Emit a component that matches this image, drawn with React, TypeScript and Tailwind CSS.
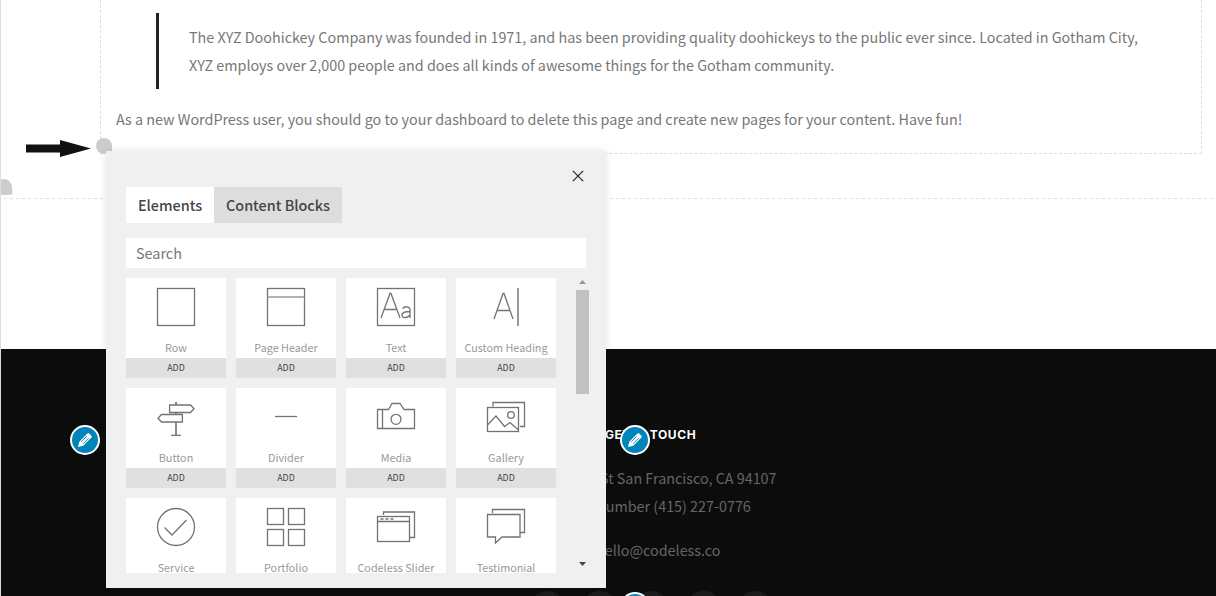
import type { ReactNode } from 'react';

const stroke = { fill: 'none', stroke: '#737373', strokeWidth: 1.3 };

function Icon({ children }: { children: ReactNode }) {
  return (
    <svg width="40" height="40" viewBox="0 0 40 40" {...stroke}>
      {children}
    </svg>
  );
}

const elements: { name: string; icon: ReactNode }[] = [
  { name: 'Row', icon: <rect x="1.5" y="1.5" width="37" height="37" /> },
  {
    name: 'Page Header',
    icon: (
      <>
        <rect x="1.5" y="1.5" width="37" height="37" />
        <path d="M1.5 10H38.5" stroke="#999" />
      </>
    ),
  },
  {
    name: 'Text',
    icon: (
      <>
        <rect x="1.5" y="1.5" width="37" height="37" />
        <path d="M5 31L14 6.5H15L24 31M8 22.5H21" />
        <path d="M26.500 21.500C29 19 34 19 34 23V31M34 24.500C29 24.500 26 25.500 26 28.200C26 31.500 31 31.500 34 28" />
      </>
    ),
  },
  {
    name: 'Custom Heading',
    icon: (
      <>
        <path d="M8 32L17 6.500H18L27 32M11 23.500H24" />
        <path d="M32 1V39" strokeWidth="2" stroke="#999" />
      </>
    ),
  },
  {
    name: 'Button',
    icon: (
      <>
        <path d="M20 5V8M20 16V17.500M20 25V38" stroke="#8a8a8a" strokeWidth="2" />
        <path d="M15 38.300H25M13.600 8H34.500L38 11.700L34.500 15.500H13.600ZM26.400 17.500H5.500L2 21.200L5.500 25H26.400Z" />
      </>
    ),
  },
  { name: 'Divider', icon: <path d="M9 19.500H31" /> },
  {
    name: 'Media',
    icon: (
      <>
        <path d="M1.500 12.500H12.500L16 6.500H24L28 12.500H38.500V31.500H1.500ZM6.500 12.500V31.500" />
        <circle cx="20" cy="22.300" r="5" />
      </>
    ),
  },
  {
    name: 'Gallery',
    icon: (
      <>
        <path d="M7 9.500V5.500H38.500V29.500H34" />
        <rect x="1.500" y="10.500" width="31" height="24" />
        <path d="M1.500 28L10 19L18.500 29.500L24 25.500L32.500 33" />
        <circle cx="25" cy="18" r="3.300" />
      </>
    ),
  },
  {
    name: 'Service',
    icon: (
      <>
        <circle cx="20" cy="20" r="18.500" />
        <path d="M8.500 20.500L16 28L30.500 13" />
      </>
    ),
  },
  {
    name: 'Portfolio',
    icon: (
      <>
        <rect x="1.500" y="1.500" width="16" height="16" />
        <rect x="22.500" y="1.500" width="16" height="16" />
        <rect x="1.500" y="22.500" width="16" height="16" />
        <rect x="22.500" y="22.500" width="16" height="16" />
      </>
    ),
  },
  {
    name: 'Codeless Slider',
    icon: (
      <>
        <path d="M7.500 8V5H38.500V30.500H34" />
        <rect x="1.500" y="9.500" width="32" height="25" />
        <path d="M1.500 14.500H33.500" />
        <path d="M4.500 12H17.500" strokeDasharray="3 2" />
      </>
    ),
  },
  {
    name: 'Testimonial',
    icon: (
      <>
        <path d="M6.500 6V2.500H38.500V25.500H34" />
        <path d="M1.500 7.500H34V30H16L9.500 36V30H1.500Z" />
      </>
    ),
  },
];

function EditBadge() {
  return (
    <span className="flex h-[30px] w-[30px] items-center justify-center rounded-full border-2 border-white bg-[#0085ba]">
      <svg width="16" height="16" viewBox="0 0 16 16">
        <path d="M1 15L2.300 9.700L10.400 1.600Q11.300 .7 12.200 1.600L14.500 3.900Q15.300 4.800 14.400 5.600L6.300 13.700Z" fill="#fff" />
        <path d="M4.300 9.700L9.700 4.300M6.200 11.600L11.700 6.100" stroke="#0085ba" strokeWidth=".9" />
      </svg>
    </span>
  );
}

function ElementCard({ name, icon }: { name: string; icon: ReactNode }) {
  return (
    <div className="h-[100px] w-[100px] bg-white">
      <div className="flex h-20 flex-col items-center pt-[9px]">
        <Icon>{icon}</Icon>
        <span className="mt-2.5 text-[10.8px] leading-5 whitespace-nowrap text-[#999]">{name}</span>
      </div>
      <div className="h-5 bg-[#e0e0e0] text-center text-[8.9px] leading-5 text-[#444]">ADD</div>
    </div>
  );
}

function ElementPicker() {
  return (
    <div className="absolute top-[151px] left-[106px] h-[437px] w-[500px] bg-[#f0f0f0] pt-9 pr-[17px] pl-5 shadow-[0_0_8px_rgba(0,0,0,0.1)]">
      <button aria-label="Close" className="absolute top-[19px] left-[466px]">
        <svg width="12" height="12" viewBox="0 0 12 12" stroke="#222" strokeWidth="1.200">
          <path d="M.8 .8L11.200 11.200M11.200 .8L.8 11.200" />
        </svg>
      </button>
      <div className="flex h-9 text-[14.4px] leading-9 font-medium text-[#444]">
        <div className="w-[88px] bg-white text-center">Elements</div>
        <div className="w-32 bg-[#ddd] text-center">Content Blocks</div>
      </div>
      <div className="mt-[15px] h-[30px] w-[460px] bg-white px-2.5 text-[14.4px] leading-[30px] text-[#777]">Search</div>
      <div className="mt-2.5 flex h-[295px] justify-between overflow-hidden">
        <div className="grid w-[430px] grid-cols-4 content-start gap-2.5">
          {elements.map((item) => (
            <ElementCard key={item.name} {...item} />
          ))}
        </div>
        <div className="flex w-[13px] flex-col items-center">
          <svg className="mt-0.5 h-2.5 w-[13px] shrink-0" viewBox="0 0 13 10">
            <path d="M3 4L6.500 0L10 4Z" fill="#969696" />
          </svg>
          <div className="h-[104px] w-[13px] bg-[#c1c1c1]" />
          <svg className="mt-auto mb-[6px] h-[5px] w-[13px]" viewBox="0 0 13 5">
            <path d="M3 0H10L6.500 4Z" fill="#444" />
          </svg>
        </div>
      </div>
    </div>
  );
}

function Content() {
  return (
    <main className="h-[349px]">
      <div className="h-[199px] bg-[repeating-linear-gradient(90deg,#ddd_0_3px,transparent_3px_6px)] bg-[length:100%_1px] bg-[position:3px_100%] bg-no-repeat pl-[99px]">
        <div className="h-[154px] w-[1102px] border-x border-b border-dashed border-[#ddd] pt-[13px] pl-[15px]">
          <blockquote className="ml-10 h-[76px] border-l-[3px] border-[#222] py-2.5 pl-[30px] whitespace-nowrap">
            The XYZ Doohickey Company was founded in 1971, and has been providing quality doohickeys to the public ever since. Located in Gotham City,
            <br />
            XYZ employs over 2,000 people and does all kinds of awesome things for the Gotham community.
          </blockquote>
          <p className="mt-4 whitespace-nowrap">
            As a new WordPress user, you should go to your dashboard to delete this page and create new pages for your content. Have fun!
          </p>
        </div>
      </div>
    </main>
  );
}

function Footer() {
  return (
    <footer className="h-[247px] bg-[#0c0c0c] pt-[72px] pl-[595px] whitespace-nowrap text-[#666]">
      <h2 className="h-7 pl-[9px] font-['Inter'] text-[12px] leading-7 font-bold tracking-[0.6px] [word-spacing:-1px] text-white">
        GET IN TOUCH
      </h2>
      <p className="mt-[15px] pl-[4px]">St San Francisco, CA 94107</p>
      <p className="pl-px">number (415) 227-0776</p>
      <p className="mt-4">hello@codeless.co</p>
      <div className="mt-[27px] ml-[-66px] flex h-[5px] gap-[17px] overflow-hidden">
        {[0, 1, 2, 3, 4].map((n) => (
          <span key={n} className="h-[35px] w-[35px] shrink-0 rounded-full bg-[#1b1b1b]" />
        ))}
      </div>
    </footer>
  );
}

export default function App() {
  return (
    <div className="relative h-[596px] w-[1216px] overflow-hidden border-l border-[#ddd] bg-white font-['Noto_Sans_CJK_SC',sans-serif] text-[14.350px] leading-7 text-[#777]">
      <Content />
      <Footer />
      <div className="absolute inset-y-0 left-[-1px] w-[1216px]">
        <span className="absolute top-[138px] left-24 h-4 w-4 rounded-full rounded-br-none bg-[#ccc]" />
        <span className="absolute top-[179px] left-[-4px] h-4 w-4 rotate-[-4deg] rounded-full rounded-br-none bg-[#ccc]" />
        <svg className="absolute top-[139px] left-[26px]" width="66" height="19" viewBox="0 0 66 19">
          <path d="M0 5.500H34V1L65 9.500L34 18V13.500H0Z" fill="#111" />
        </svg>
        <ElementPicker />
        <div className="absolute top-[425px] left-[70px]"><EditBadge /></div>
        <div className="absolute top-[425px] left-[620px]"><EditBadge /></div>
        <div className="absolute top-[592px] left-[620px]"><EditBadge /></div>
      </div>
      <div className="absolute inset-y-0 left-[-1px] w-px bg-[#ddd]" />
    </div>
  );
}
